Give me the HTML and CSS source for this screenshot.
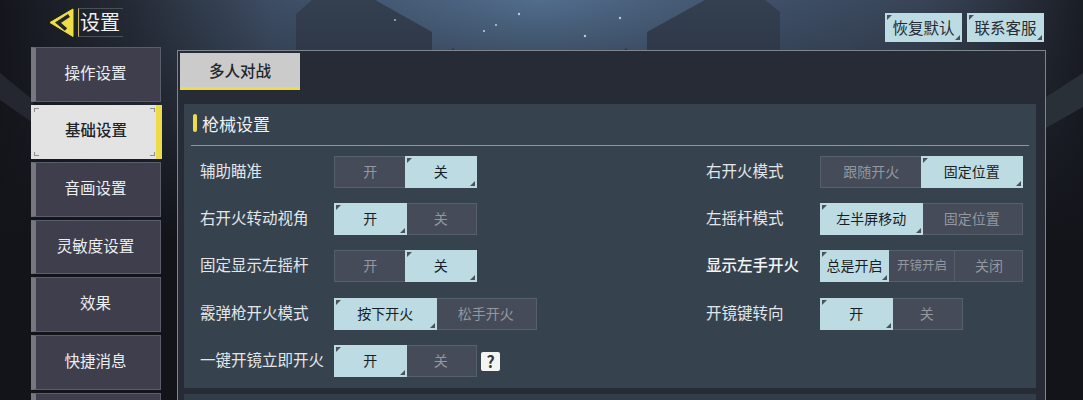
FILE: index.html
```html
<!DOCTYPE html>
<html lang="zh-CN">
<head>
  <meta charset="UTF-8">
  <meta name="viewport" content="width=device-width, initial-scale=1.0">
  <title>设置</title>
  <link rel="stylesheet" href="styles.css">
</head>
<body>
  <!-- backdrop art -->
  <svg class="backdrop" width="1083" height="400" viewBox="0 0 1083 400">
    <defs>
      <radialGradient id="sky" gradientUnits="userSpaceOnUse" cx="540" cy="0" r="560" gradientTransform="matrix(1 0 0 .4 0 0)">
        <stop offset="0" stop-color="#516d8c"/>
        <stop offset=".4" stop-color="#3f5068"/>
        <stop offset="1" stop-color="#2f3744"/>
      </radialGradient>
      <linearGradient id="sides" x1="0" x2="1" y1="0" y2="0">
        <stop offset="0" stop-color="#14161c"/>
        <stop offset=".12" stop-color="#1f232c" stop-opacity=".75"/>
        <stop offset=".25" stop-color="#272d39" stop-opacity="0"/>
        <stop offset=".85" stop-color="#272d39" stop-opacity="0"/>
        <stop offset="1" stop-color="#14161c" stop-opacity=".8"/>
      </linearGradient>
      <linearGradient id="fall" x1="0" x2="0" y1="0" y2="1">
        <stop offset="0" stop-color="#12141a" stop-opacity="0"/>
        <stop offset=".25" stop-color="#12141a" stop-opacity=".3"/>
        <stop offset=".6" stop-color="#12141a" stop-opacity="1"/>
      </linearGradient>
    </defs>
    <rect width="1083" height="400" fill="url(#sky)"/>
    <path d="M296 14 L312 0 L375 0 L432 32 L432 60 L296 60Z" fill="#343f50"/>
    <path d="M647 32 L705 0 L765 0 L780 12 L780 60 L647 60Z" fill="#343f50"/>
    <path d="M452 48 L480 68 L452 68Z" fill="#303a49"/>
    <path d="M627 48 L598 68 L627 68Z" fill="#303a49"/>
    <rect width="1083" height="400" fill="url(#sides)"/>
    <rect width="1083" height="400" fill="url(#fall)"/>
    <path d="M0 73 L33 100 L33 123 L0 100Z" fill="#24272f"/>
    <path d="M1046 97 L1083 73 L1083 107 L1046 128Z" fill="#2a3038"/>
    <g fill="#b6cce2">
      <circle cx="519" cy="14" r="1.2"/><circle cx="620" cy="18" r="1.2"/><circle cx="484" cy="31" r="1.1"/>
      <circle cx="585" cy="36" r="1.2"/><circle cx="395" cy="20" r=".9"/><circle cx="496" cy="25" r="1"/>
    </g>
  </svg>

  <div class="page">
    <header class="topbar">
      <div class="title">
        <svg class="back-icon" width="25" height="30" viewBox="0 0 25 30">
          <path d="M1 14.5 L24 1 V28.5Z" fill="#efdf45" stroke="#efdf45" stroke-width="1" stroke-linejoin="round"/>
          <path d="M20 7.5 L9 14.7 L17 21.5" fill="none" stroke="#23262c" stroke-width="3.6"/>
        </svg>
        <span class="title-text">设置</span>
      </div>
      <div class="top-actions">
        <button class="top-btn">恢复默认</button>
        <button class="top-btn">联系客服</button>
      </div>
    </header>

    <div class="main">
      <nav class="sidebar">
        <a class="nav-item">操作设置</a>
        <a class="nav-item active">基础设置</a>
        <a class="nav-item">音画设置</a>
        <a class="nav-item">灵敏度设置</a>
        <a class="nav-item">效果</a>
        <a class="nav-item">快捷消息</a>
        <a class="nav-item">&nbsp;</a>
      </nav>

      <section class="panel">
        <div class="tabs"><div class="tab">多人对战</div></div>

        <div class="group">
          <h2 class="group-title">枪械设置</h2>
          <div class="settings">
            <div class="row">
              <span class="label">辅助瞄准</span>
              <div class="toggle"><span class="opt">开</span><span class="opt on">关</span></div>
            </div>
            <div class="row right">
              <span class="label">右开火模式</span>
              <div class="toggle wide"><span class="opt">跟随开火</span><span class="opt on">固定位置</span></div>
            </div>
            <div class="row">
              <span class="label">右开火转动视角</span>
              <div class="toggle"><span class="opt on">开</span><span class="opt">关</span></div>
            </div>
            <div class="row right">
              <span class="label">左摇杆模式</span>
              <div class="toggle wide"><span class="opt on">左半屏移动</span><span class="opt">固定位置</span></div>
            </div>
            <div class="row">
              <span class="label">固定显示左摇杆</span>
              <div class="toggle"><span class="opt">开</span><span class="opt on">关</span></div>
            </div>
            <div class="row right">
              <span class="label strong">显示左手开火</span>
              <div class="toggle wide three"><span class="opt on">总是开启</span><span class="opt small">开镜开启</span><span class="opt">关闭</span></div>
            </div>
            <div class="row">
              <span class="label">霰弹枪开火模式</span>
              <div class="toggle wide"><span class="opt on">按下开火</span><span class="opt">松手开火</span></div>
            </div>
            <div class="row right">
              <span class="label">开镜键转向</span>
              <div class="toggle"><span class="opt on">开</span><span class="opt">关</span></div>
            </div>
            <div class="row">
              <span class="label">一键开镜立即开火</span>
              <div class="toggle"><span class="opt on">开</span><span class="opt">关</span></div>
              <span class="help">?</span>
            </div>
          </div>
        </div>

        <div class="group next"></div>
      </section>
    </div>
  </div>
</body>
</html>
```

FILE: styles.css
```css
* {
  box-sizing: border-box;
}

html, body {
  margin: 0;
  height: 400px;
  overflow: hidden;
  background: #1c2029;
}

body {
  position: relative;
  font-family: "Noto Sans CJK SC", "Noto Sans", sans-serif;
  color: #e4e8ea;
}

.backdrop {
  position: absolute;
  top: 0;
  left: 0;
}

.page {
  position: relative;
  width: 1083px;
  height: 400px;
  overflow: hidden;
}

/* top bar */
.topbar {
  display: flex;
  justify-content: space-between;
  height: 47px;
  padding: 8px 39px 0 49px;
}

.title {
  display: flex;
  align-items: flex-start;
}

.title-text {
  height: 29px;
  margin-left: 4px;
  padding: 0 3px 0 1px;
  border-left: 1px solid #c9b94a;
  border-top: 1px solid #4a505a;
  border-bottom: 1px solid #4a505a;
  font-size: 20px;
  line-height: 26px;
  color: #eef0f2;
}

.top-actions {
  display: flex;
  gap: 5px;
  padding-top: 5px;
}

.top-btn,
.opt.on {
  position: relative;
}

.top-btn {
  width: 77px;
  height: 29px;
  padding: 0 0 2px;
  border: 0;
  background: #bcdbe2;
  font-family: inherit;
  font-size: 15.5px;
  color: #262b33;
}

.top-btn::before,
.opt.on::before {
  content: "";
  position: absolute;
  top: 2px;
  left: 2px;
  border-top: 5px solid #4c5358;
  border-right: 5px solid transparent;
}

.top-btn::after,
.opt.on::after {
  content: "";
  position: absolute;
  right: 2px;
  bottom: 2px;
  border-bottom: 5px solid #4c5358;
  border-left: 5px solid transparent;
}

/* main area */
.main {
  display: flex;
  gap: 16px;
  padding-left: 31px;
}

.sidebar {
  display: flex;
  flex-direction: column;
  gap: 3px;
  width: 130px;
  flex: none;
}

.nav-item {
  position: relative;
  display: flex;
  align-items: center;
  justify-content: center;
  flex: none;
  height: 54.6px;
  padding: 0 5px 5px 0;
  border: 1px solid #5a5e6a;
  border-left: 5px solid #77787f;
  background: #3f3e4d;
  font-size: 15.5px;
  color: #eceef0;
}

.nav-item.active {
  width: 131px;
  padding: 0 0 5px 5px;
  border: 0;
  border-right: 6px solid #ecdc4a;
  background: #e3e3e3;
  color: #20242a;
  font-weight: 500;
}

.nav-item.active::before,
.nav-item.active::after {
  content: "";
  position: absolute;
  left: 3px;
  right: 1px;
  height: 4px;
  border-left: 1px solid #8d8d8d;
  border-right: 1px solid #8d8d8d;
  background: linear-gradient(90deg, #8d8d8d 4px, transparent 4px calc(100% - 4px), #8d8d8d calc(100% - 4px)) no-repeat;
  background-size: 100% 1px;
}

.nav-item.active::before {
  top: 3px;
  background-position: top;
}

.nav-item.active::after {
  bottom: 3px;
  background-position: bottom;
}

.panel {
  width: 869px;
  height: 360px;
  margin-top: 3px;
  padding: 2px 8px 0 2px;
  border: 1px solid #7f858d;
  border-bottom: 0;
  background: #262b36;
}

.tabs {
  display: flex;
  height: 51px;
}

.tab {
  width: 120px;
  height: 37px;
  padding-bottom: 3px;
  border-bottom: 3px solid #ecdc4a;
  background: #cbcbcb;
  font-size: 15.5px;
  font-weight: 500;
  line-height: 34px;
  text-align: center;
  color: #22262c;
}

.group {
  width: 852px;
  height: 284px;
  margin-left: 4px;
  padding: 0 7px;
  background: #36434f;
}

.group.next {
  height: 40px;
  margin-top: 6px;
  background: #333c49;
}

.group-title {
  display: flex;
  align-items: center;
  gap: 5px;
  height: 42px;
  margin: 0;
  padding: 0 0 3px 2px;
  border-bottom: 1px solid #8b979f;
  font-size: 17px;
  font-weight: 400;
  color: #eef0f2;
}

.group-title::before {
  content: "";
  width: 4px;
  height: 18px;
  border-radius: 2px;
  background: #ecdc4a;
}

.settings {
  display: grid;
  grid-template-columns: 506px 1fr;
  grid-auto-rows: 47.2px;
  padding: 10px 0 0 9px;
}

.row {
  display: flex;
  align-items: flex-start;
  height: 32px;
}

.label {
  width: 134px;
  flex: none;
  font-size: 15.5px;
  line-height: 28px;
  color: #e2e6e8;
  white-space: nowrap;
}

.row.right .label {
  width: 114px;
}

.label.strong {
  font-weight: 500;
  color: #f2f4f5;
}

.toggle {
  display: grid;
  grid-auto-flow: column;
  grid-auto-columns: 1fr;
  width: 143px;
  height: 32px;
  border: 1px solid #56606b;
  background: #454b58;
}

.toggle.wide {
  width: 203px;
}

.opt {
  margin: -1px;
  font-size: 14px;
  line-height: 30px;
  text-align: center;
  color: #93979f;
}

.opt.small {
  font-size: 12.5px;
}

.three .opt {
  border-left: 1px solid #56606b;
}

.opt.on {
  border: 0;
  background: #bcdbe2;
  color: #1a1e24;
}

.help {
  width: 19px;
  height: 19px;
  margin: 7px 0 0 4px;
  border-radius: 2px;
  background: #f4f4f4;
  font-size: 16px;
  font-weight: 700;
  line-height: 18px;
  text-align: center;
  color: #34383c;
}
```
